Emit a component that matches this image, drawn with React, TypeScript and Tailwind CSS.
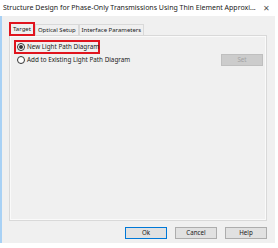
const font = { fontFamily: '"Noto Sans", "Open Sans", Arial, sans-serif' };

function Tab({ label, active }: { label: string; active?: boolean }) {
  if (active) {
    return (
      <div className="relative z-10 -mb-px flex h-[14px] items-center border-2 border-[#e0141e] bg-[#f0f0f0] px-[2px] text-[6px] text-[#1a1a1a]">
        {label}
      </div>
    );
  }
  return (
    <div className="mt-[2px] flex h-[11px] items-center border border-b-0 border-[#d9d9d9] bg-[#f0f0f0] px-[2px] text-[6px] text-[#1a1a1a]">
      {label}
    </div>
  );
}

function Radio({ checked }: { checked?: boolean }) {
  return (
    <span className="flex h-[8px] w-[8px] shrink-0 items-center justify-center rounded-full border border-[#333] bg-white">
      {checked && <span className="h-[4px] w-[4px] rounded-full bg-[#333]" />}
    </span>
  );
}

function Btn({ label, primary }: { label: string; primary?: boolean }) {
  return (
    <div
      className={
        "flex h-[12px] w-[42px] items-center justify-center border bg-[#e1e1e1] text-[6.2px] text-[#1a1a1a] " +
        (primary ? "border-[#0078d7]" : "border-[#adadad]")
      }
    >
      {label}
    </div>
  );
}

export default function App() {
  return (
    <div className="h-[248px] w-[278px] bg-white" style={font}>
      <div className="flex h-[16px] items-center justify-between pl-[3px] pr-[8px] text-[7px] text-[#1a1a1a]">
        <span className="whitespace-nowrap">
          Structure Design for Phase-Only Transmissions Using Thin Element Approxi...
        </span>
        <span className="text-[8px] text-[#555]">✕</span>
      </div>
      <div className="flex h-[227px] w-[275px] flex-col border-l-2 border-[#a8d1f5] bg-[#f0f0f0] pl-[7px] pt-[6px]">
        <div className="flex items-end">
          <Tab label="Target" active />
          <Tab label="Optical Setup" />
          <Tab label="Interface Parameters" />
        </div>
        <div className="flex h-[186px] w-[258px] flex-col border border-[#d9d9d9] bg-[#f0f0f0] pl-[4px] pt-[4px] text-[6.3px] text-[#1a1a1a] shadow-[inset_0_0_0_1px_#fafafa]">
          <div className="flex h-[14px] w-[86px] items-center gap-[2px] border-2 border-[#e0141e] pl-[1px]">
            <Radio checked />
            <span className="whitespace-nowrap">New Light Path Diagram</span>
          </div>
          <div className="flex items-center justify-between pr-[3px]">
            <div className="flex items-center gap-[2px] pl-[3px]">
              <Radio />
              <span className="whitespace-nowrap">Add to Existing Light Path Diagram</span>
            </div>
            <div className="flex h-[12px] w-[42px] items-center justify-center border border-[#bfbfbf] bg-[#cccccc] text-[6.2px] text-[#a3a3a3]">
              Set
            </div>
          </div>
        </div>
        <div className="mt-[6px] flex w-[258px] justify-end gap-[8px]">
          <Btn label="Ok" primary />
          <Btn label="Cancel" />
          <Btn label="Help" />
        </div>
      </div>
    </div>
  );
}
